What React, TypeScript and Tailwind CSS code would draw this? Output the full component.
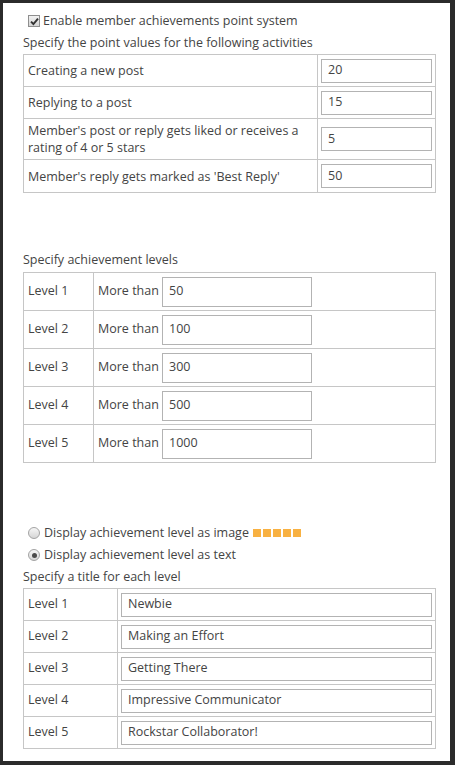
import React from "react";

const font = { fontFamily: '"Open Sans", "Liberation Sans", sans-serif' };

const activities = [
  { label: "Creating a new post", value: "20", h: "h-[32px]" },
  { label: "Replying to a post", value: "15", h: "h-[32px]" },
  {
    label: (
      <>
        Member's post or reply gets liked or receives a<br />
        rating of 4 or 5 stars
      </>
    ),
    value: "5",
    h: "h-[41px]",
  },
  { label: "Member's reply gets marked as 'Best Reply'", value: "50", h: "h-[33px]" },
];

const levels = ["50", "100", "300", "500", "1000"];
const titles = ["Newbie", "Making an Effort", "Getting There", "Impressive Communicator", "Rockstar Collaborator!"];

function CheckBox() {
  return (
    <span className="ml-[5px] flex h-[12px] w-[12px] items-center justify-center border border-[#8e8e8e] bg-gradient-to-b from-[#f2f2f2] to-[#d4d4d4]">
      <svg width="9" height="9" viewBox="0 0 9 9">
        <path d="M1 4.6 L3.4 7 L8 1.6" fill="none" stroke="#333" strokeWidth="1.9" />
      </svg>
    </span>
  );
}

function Radio({ checked }: { checked?: boolean }) {
  return (
    <span className="ml-[5px] flex h-[12px] w-[12px] items-center justify-center rounded-full border border-[#a3a3a3] bg-gradient-to-b from-[#f6f6f6] to-[#d6d6d6]">
      {checked && <span className="h-[5px] w-[5px] rounded-full bg-[#4a4a4a]" />}
    </span>
  );
}

function TextBox({ value, className }: { value: string; className: string }) {
  return (
    <div className={`flex items-center border border-[#b3b3b3] bg-white px-[6px] text-[12.5px] text-[#444] ${className}`}>
      {value}
    </div>
  );
}

export default function App() {
  return (
    <div className="h-[765px] w-[455px] bg-[#2b2b2b] pl-[3px] pt-[3px]" style={font}>
      <div className="h-[758px] w-[447px] bg-white pl-[20px] pt-[7px] text-[12.5px] text-[#444]">
        <div className="flex h-[22px] items-center gap-[3px]">
          <CheckBox />
          <span>Enable member achievements point system</span>
        </div>
        <div className="flex h-[22px] items-center">Specify the point values for the following activities</div>

        <table className="w-[413px] border-collapse">
          <tbody>
            {activities.map((a, i) => (
              <tr key={i} className={a.h}>
                <td className="w-[294px] border border-[#c6c6c6] px-[4px] leading-[17px]">{a.label}</td>
                <td className="border border-[#c6c6c6] px-[3px]">
                  <TextBox value={a.value} className="h-[24px] w-full" />
                </td>
              </tr>
            ))}
          </tbody>
        </table>

        <div className="mt-[56px] flex h-[23px] items-center">Specify achievement levels</div>
        <table className="w-[413px] border-collapse">
          <tbody>
            {levels.map((v, i) => (
              <tr key={i} className="h-[38px]">
                <td className="w-[70px] border border-[#c6c6c6] px-[4px]">Level {i + 1}</td>
                <td className="border border-[#c6c6c6] px-[4px]">
                  <div className="flex items-center">
                    <span className="w-[64px] shrink-0">More than</span>
                    <TextBox value={v} className="h-[30px] w-[150px]" />
                  </div>
                </td>
              </tr>
            ))}
          </tbody>
        </table>

        <div className="mt-[59px] flex h-[22px] items-center gap-[4px]">
          <Radio />
          <span>Display achievement level as image</span>
          <span className="flex gap-[2px]">
            {[0, 1, 2, 3, 4].map((k) => (
              <span key={k} className="h-[8px] w-[8px] bg-[#f8b142]" />
            ))}
          </span>
        </div>
        <div className="flex h-[22px] items-center gap-[4px]">
          <Radio checked />
          <span>Display achievement level as text</span>
        </div>
        <div className="flex h-[22px] items-center">Specify a title for each level</div>

        <table className="w-[413px] border-collapse">
          <tbody>
            {titles.map((t, i) => (
              <tr key={i} className="h-[32px]">
                <td className="w-[94px] border border-[#c6c6c6] px-[4px]">Level {i + 1}</td>
                <td className="border border-[#c6c6c6] px-[3px]">
                  <TextBox value={t} className="h-[24px] w-full" />
                </td>
              </tr>
            ))}
          </tbody>
        </table>
      </div>
    </div>
  );
}
